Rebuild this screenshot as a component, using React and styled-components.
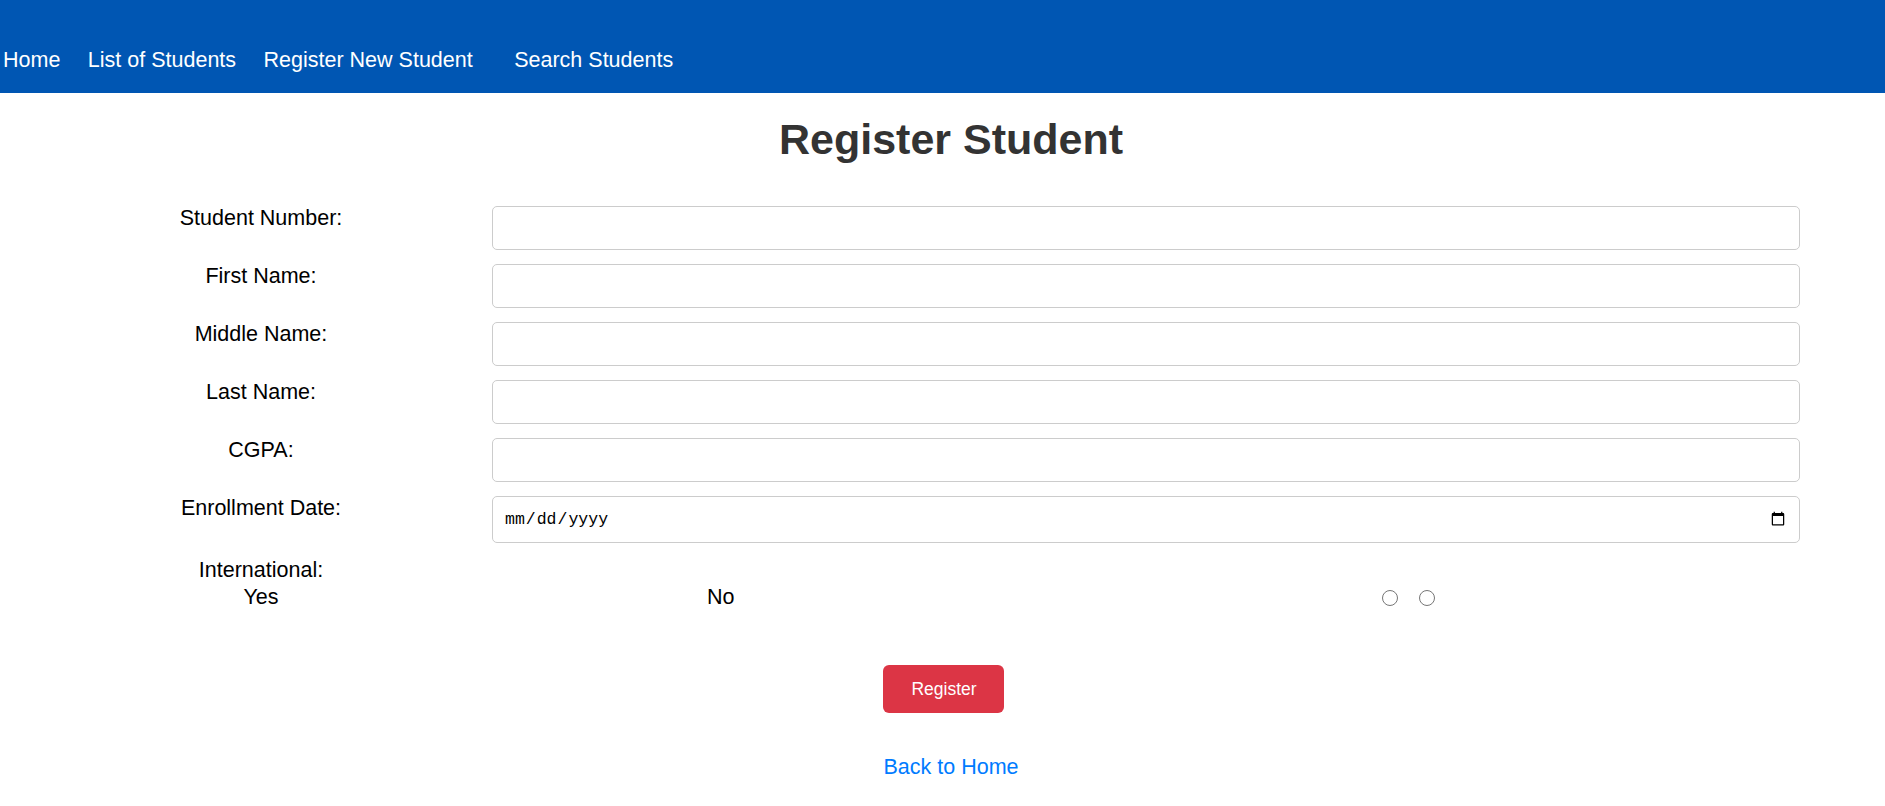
import React from 'react'
import styled, { createGlobalStyle } from 'styled-components'

const fields = [
  { label: 'Student Number:', name: 'studentNumber' },
  { label: 'First Name:', name: 'firstName' },
  { label: 'Middle Name:', name: 'middleName' },
  { label: 'Last Name:', name: 'lastName' },
  { label: 'CGPA:', name: 'cgpa' },
]

const links = ['Home', 'List of Students', 'Register New Student', 'Search Students']

export default function App() {
  return (
    <React.Fragment>
      <GlobalStyle />
      <NavBar>
        {links.map((el, i) => (
          <NavLink href="#" key={i} $spaced={i === 3}>
            {el}
          </NavLink>
        ))}
      </NavBar>
      <Title>Register Student</Title>
      <Form onSubmit={e => e.preventDefault()}>
        {fields.map(f => (
          <React.Fragment key={f.name}>
            <Label htmlFor={f.name}>{f.label}</Label>
            <TextInput id={f.name} name={f.name} type="text" />
          </React.Fragment>
        ))}
        <Label htmlFor="enrollmentDate">Enrollment Date:</Label>
        <DateInput id="enrollmentDate" name="enrollmentDate" type="date" />
        <LabelStack>
          <span>International:</span>
          <span>Yes</span>
        </LabelStack>
        <RadioGroup>
          <Option>No</Option>
          <Radio name="international" value="yes" $gap={648} />
          <Radio name="international" value="no" $gap={21} />
        </RadioGroup>
      </Form>
      <Actions>
        <Button type="button">Register</Button>
        <BackLink href="#">Back to Home</BackLink>
      </Actions>
    </React.Fragment>
  )
}

const GlobalStyle = createGlobalStyle`
  * {
    box-sizing: border-box;
  }

  body {
    margin: 0;
    background: #fff;
    font-family: 'Liberation Sans', Arial, sans-serif;
  }
`

const NavBar = styled.nav`
  display: flex;
  align-items: flex-start;
  gap: 27.5px;

  height: 93px;
  padding: 48px 0 0 3px;

  background: #0056b3;
`

const NavLink = styled.a`
  margin-left: ${p => (p.$spaced ? '14px' : '0')};

  color: #fff;
  font-size: 21.5px;
  line-height: normal;
  text-decoration: none;
`

const Title = styled.h1`
  margin: 22px 0 42px;
  padding-left: 17px;

  color: #333;
  font-size: 43px;
  font-weight: 700;
  line-height: normal;
  text-align: center;
`

const Form = styled.form`
  display: grid;
  grid-template-columns: 352px 1fr;
  column-gap: 55px;
  row-gap: 14px;
  align-items: start;

  padding: 0 85px;
`

const Label = styled.label`
  color: #000;
  font-size: 21.5px;
  line-height: normal;
  text-align: center;
`

const TextInput = styled.input`
  width: 100%;
  height: 44px;
  padding: 0 11px;

  border: 1px solid #ccc;
  border-radius: 5px;

  font-size: 17px;
  background: #fff;
`

const DateInput = styled(TextInput)`
  height: 47px;

  color: #000;
  font-family: 'Liberation Mono', monospace;
  font-size: 16.5px;
`

const LabelStack = styled.div`
  display: flex;
  flex-direction: column;
  align-items: center;

  color: #000;
  font-size: 21.5px;
  line-height: 27px;
`

const RadioGroup = styled.div`
  display: flex;
  align-items: center;

  height: 54px;
  padding-top: 27px;

  color: #000;
  font-size: 21.5px;
  line-height: 27px;
`

const Option = styled.span`
  margin-left: 215px;
`

const Radio = styled.input.attrs({ type: 'radio' })`
  width: 16px;
  height: 16px;
  margin: 0 0 0 ${p => p.$gap}px;
`

const Actions = styled.div`
  display: flex;
  flex-direction: column;
  align-items: flex-start;
  gap: 41.5px;

  width: fit-content;
  margin: 54px auto 0;
  padding-left: 17px;
`

const Button = styled.button`
  width: 121px;
  height: 48px;

  border: none;
  border-radius: 6px;

  color: #fff;
  font-family: inherit;
  font-size: 17.5px;
  background: #dc3545;
  cursor: pointer;
`

const BackLink = styled.a`
  color: #007bff;
  font-size: 21.5px;
  line-height: normal;
  text-decoration: none;
`
